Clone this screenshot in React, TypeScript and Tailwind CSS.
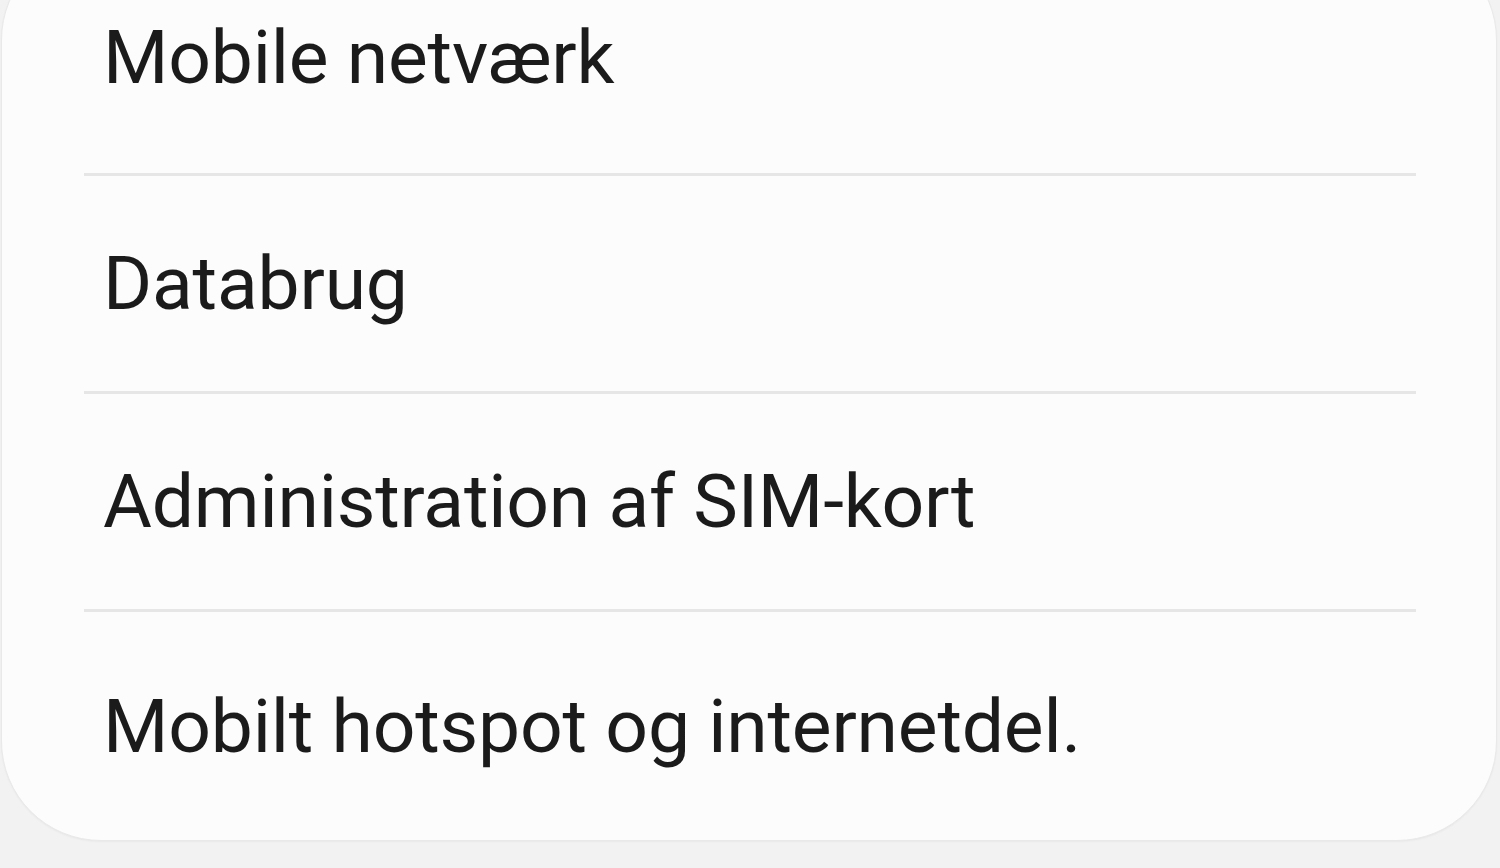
const ITEMS = ["Mobile netværk", "Databrug", "Administration af SIM-kort", "Mobilt hotspot og internetdel."];

function rowHeight(i: number) {
  if (i === 0) return "h-[232px]";
  if (i === ITEMS.length - 1) return "h-[228px]";
  return "h-[215px]";
}

export default function App() {
  return (
    <div className="h-[868px] w-[1500px] overflow-hidden bg-[#f2f2f2] font-['Roboto',sans-serif]">
      <div className="-mt-[60px] ml-[1px] mr-[3px] rounded-[100px] border border-[#e9e9e9] bg-[#fcfcfc] shadow-[0_1px_2px_rgba(0,0,0,0.04)]">
        {ITEMS.map((label, i) => (
          <div key={label}>
            {i > 0 && <div className="ml-[82px] mr-[80px] h-[3px] bg-[#e6e6e6]" />}
            <div
              className={`${rowHeight(i)} flex items-center pl-[101px] text-[75px] leading-none tracking-[-0.2px] text-[#1b1b1b]`}
            >
              {label}
            </div>
          </div>
        ))}
      </div>
    </div>
  );
}
